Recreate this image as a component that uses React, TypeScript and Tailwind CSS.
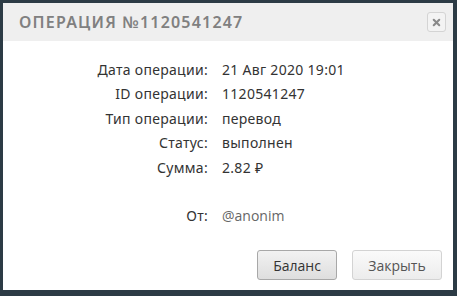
import { X } from "lucide-react";

const rows: [string, string][] = [
  ["Дата операции:", "21 Авг 2020 19:01"],
  ["ID операции:", "1120541247"],
  ["Тип операции:", "перевод"],
  ["Статус:", "выполнен"],
  ["Сумма:", "2.82 ₽"],
];

const App = () => {
  return (
    <div className="h-[296px] w-[457px] overflow-hidden bg-[#2c3b45] pl-[3px] pt-[3px]">
      <div className="flex h-[287px] w-[450px] flex-col bg-white">
        <div className="flex h-[38px] items-center justify-between bg-[#efefef] pl-[16px] pr-[7px]">
          <h2 className="font-['Noto_Sans',sans-serif] text-[16px] font-semibold uppercase tracking-[1.2px] text-[#808080]">
            Операция №1120541247
          </h2>
          <button className="flex h-[20px] w-[19px] items-center justify-center rounded-[3px] border border-[#d4d4d4] bg-[#f3f3f3]">
            <X size={11} strokeWidth={4.5} className="text-[#8a8a8a]" />
          </button>
        </div>

        <div className="grid grid-cols-[205px_1fr] gap-x-[14px] pt-[17px] font-['Noto_Sans',sans-serif] text-[14px] leading-[24.4px] tracking-[0.3px] text-[#333]">
          {rows.map(([label, value]) => (
            <div key={label} className="contents">
              <span className="text-right">{label}</span>
              <span>{value}</span>
            </div>
          ))}
          <span className="text-right">&nbsp;</span>
          <span>&nbsp;</span>
          <span className="text-right">От:</span>
          <span className="font-['Open_Sans',sans-serif] tracking-normal text-[#666]">@anonim</span>
        </div>

        <div className="mt-auto flex justify-end gap-[15px] pb-[10px] pr-[11px] font-['Open_Sans',sans-serif] text-[14px]">
          <button className="h-[30px] w-[80px] rounded-[3px] border border-[#a8a8a8] bg-gradient-to-b from-[#f2f2f2] to-[#dedede] text-[#333]">
            Баланс
          </button>
          <button className="h-[30px] w-[90px] rounded-[3px] border border-[#d3d3d3] bg-gradient-to-b from-[#fafafa] to-[#ececec] text-[#555]">
            Закрыть
          </button>
        </div>
      </div>
    </div>
  );
};

export default App;
